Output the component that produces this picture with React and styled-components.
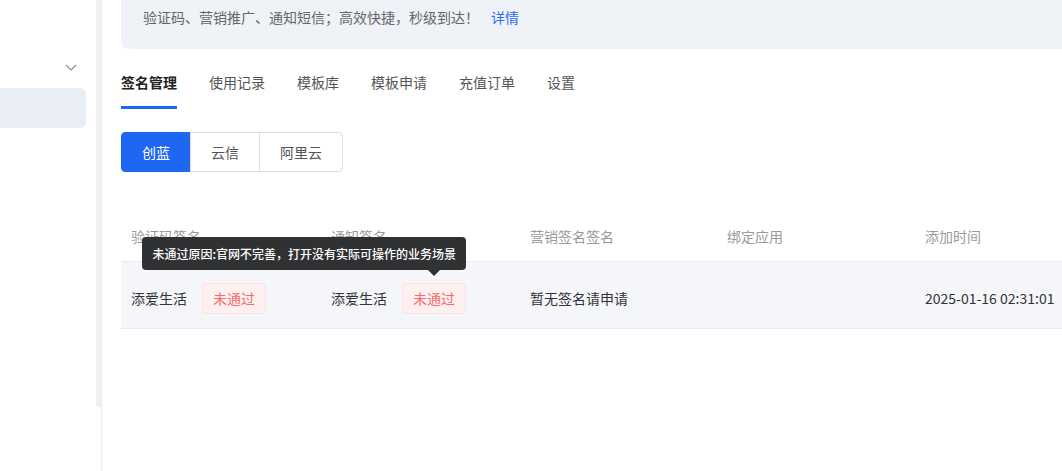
import React from 'react';
import styled, { createGlobalStyle } from 'styled-components';

const GlobalStyle = createGlobalStyle`
  html, body {
    margin: 0;
    padding: 0;
    background: #fff;
    overflow: hidden;
    font-family: 'Noto Sans CJK SC', 'Noto Sans', sans-serif;
  }
`;

const Page = styled.div`
  display: flex;
  height: 471px;
  width: 1062px;
  overflow: hidden;
`;

const Sidebar = styled.aside`
  width: 101px;
  flex-shrink: 0;
  display: flex;
  border-right: 1px solid #ececec;
`;

const SideNav = styled.nav`
  width: 96px;
  padding-top: 52px;
`;

const SideGroup = styled.div`
  height: 30px;
  display: flex;
  justify-content: flex-end;
  align-items: center;
  padding-right: 19px;
  color: #8a8a8a;
`;

const SideItem = styled.div`
  margin-top: 6px;
  margin-left: -10px;
  width: 96px;
  height: 40px;
  border-radius: 6px;
  background: ${p => (p.$active ? '#e9edf6' : 'transparent')};
`;

const ScrollTrack = styled.div`
  width: 5px;
  height: 407px;
  background: #f1f1f1;
`;

const Main = styled.main`
  flex: 1;
  padding-left: 19px;
  min-width: 0;
`;

const Banner = styled.div`
  width: 1100px;
  height: 49px;
  background: #eff2f7;
  border-radius: 0 0 0 8px;
  padding-left: 22px;
  box-sizing: border-box;
  display: flex;
  align-items: flex-start;
  padding-top: 6px;
  font-size: 14px;
  line-height: 22px;
  color: #666;
`;

const BannerLink = styled.a`
  color: #2a6ef5;
  margin-left: 12px;
  text-decoration: none;
`;

const Tabs = styled.div`
  display: flex;
  gap: 32px;
  margin-top: 22px;
`;

const Tab = styled.div`
  font-size: 14px;
  line-height: 22px;
  padding-bottom: 13px;
  color: ${p => (p.$active ? '#222' : '#555')};
  font-weight: ${p => (p.$active ? 600 : 400)};
  border-bottom: 3px solid ${p => (p.$active ? '#1f66f2' : 'transparent')};
`;

const Segments = styled.div`
  display: flex;
  margin-top: 23px;
`;

const Segment = styled.button`
  height: 40px;
  padding: 0 20px;
  font-family: inherit;
  font-size: 14px;
  border: 1px solid ${p => (p.$active ? '#1f66f2' : '#dcdfe6')};
  background: ${p => (p.$active ? '#1f66f2' : '#fff')};
  color: ${p => (p.$active ? '#fff' : '#555')};
  margin-left: -1px;
  &:first-child {
    margin-left: 0;
    border-radius: 4px 0 0 4px;
  }
  &:last-child {
    border-radius: 0 4px 4px 0;
  }
`;

const Table = styled.div`
  margin-top: 39px;
  width: 1200px;
`;

const Row = styled.div`
  display: grid;
  grid-template-columns: 200px 199px 197px 198px 199px 199px;
  height: ${p => (p.$head ? '51px' : '67px')};
  box-sizing: border-box;
  padding-top: ${p => (p.$head ? '0' : '6px')};
  background: ${p => (p.$head ? '#fff' : '#f5f6fa')};
  border-bottom: 1px solid #e8ebf1;
  align-items: center;
  padding-left: 10px;
  font-size: 14px;
  color: ${p => (p.$head ? '#9a9a9a' : '#333')};
`;

const Cell = styled.div`
  display: flex;
  align-items: center;
  gap: 15px;
  white-space: nowrap;
`;

const BadgeWrap = styled.span`
  position: relative;
  display: inline-flex;
`;

const Badge = styled.span`
  height: 31px;
  box-sizing: border-box;
  padding: 0 10px;
  display: inline-flex;
  align-items: center;
  background: #fef0f0;
  border: 1px solid #fde2e2;
  border-radius: 3px;
  color: #f56c6c;
  font-size: 14px;
`;

const Tooltip = styled.div`
  position: absolute;
  right: 0;
  bottom: calc(100% + 13px);
  height: 33px;
  padding: 0 10px;
  display: flex;
  align-items: center;
  white-space: nowrap;
  background: #303133;
  color: #fff;
  font-size: 12px;
  font-weight: 500;
  border-radius: 4px;
  z-index: 5;
  &::after {
    content: '';
    position: absolute;
    top: 100%;
    right: 26px;
    border: 6px solid transparent;
    border-top-color: #303133;
    border-bottom: 0;
  }
`;

const Chevron = () => (
  <svg width="12" height="12" viewBox="0 0 12 12" fill="none" stroke="currentColor" strokeWidth="1.1">
    <path d="M1 4l5 5 5-5" />
  </svg>
);

const tabs = ['签名管理', '使用记录', '模板库', '模板申请', '充值订单', '设置'];
const vendors = ['创蓝', '云信', '阿里云'];
const heads = ['验证码签名', '通知签名', '营销签名签名', '绑定应用', '添加时间', ''];

export default function App() {
  return (
    <>
      <GlobalStyle />
      <Page>
        <Sidebar>
          <SideNav>
            <SideGroup>
              <Chevron />
            </SideGroup>
            <SideItem $active />
          </SideNav>
          <ScrollTrack />
        </Sidebar>
        <Main>
          <Banner>
            验证码、营销推广、通知短信；高效快捷，秒级到达！
            <BannerLink href="#">详情</BannerLink>
          </Banner>
          <Tabs>
            {tabs.map((t, i) => (
              <Tab key={t} $active={i === 0}>{t}</Tab>
            ))}
          </Tabs>
          <Segments>
            {vendors.map((v, i) => (
              <Segment key={v} $active={i === 0}>{v}</Segment>
            ))}
          </Segments>
          <Table>
            <Row $head>
              {heads.map((h, i) => (
                <Cell key={i}>{h}</Cell>
              ))}
            </Row>
            <Row>
              <Cell>
                添爱生活
                <BadgeWrap><Badge>未通过</Badge></BadgeWrap>
              </Cell>
              <Cell>
                添爱生活
                <BadgeWrap>
                  <Badge>未通过</Badge>
                  <Tooltip>未通过原因:官网不完善，打开没有实际可操作的业务场景</Tooltip>
                </BadgeWrap>
              </Cell>
              <Cell>暂无签名请申请</Cell>
              <Cell />
              <Cell>2025-01-16 02:31:01</Cell>
              <Cell />
            </Row>
          </Table>
        </Main>
      </Page>
    </>
  );
}
